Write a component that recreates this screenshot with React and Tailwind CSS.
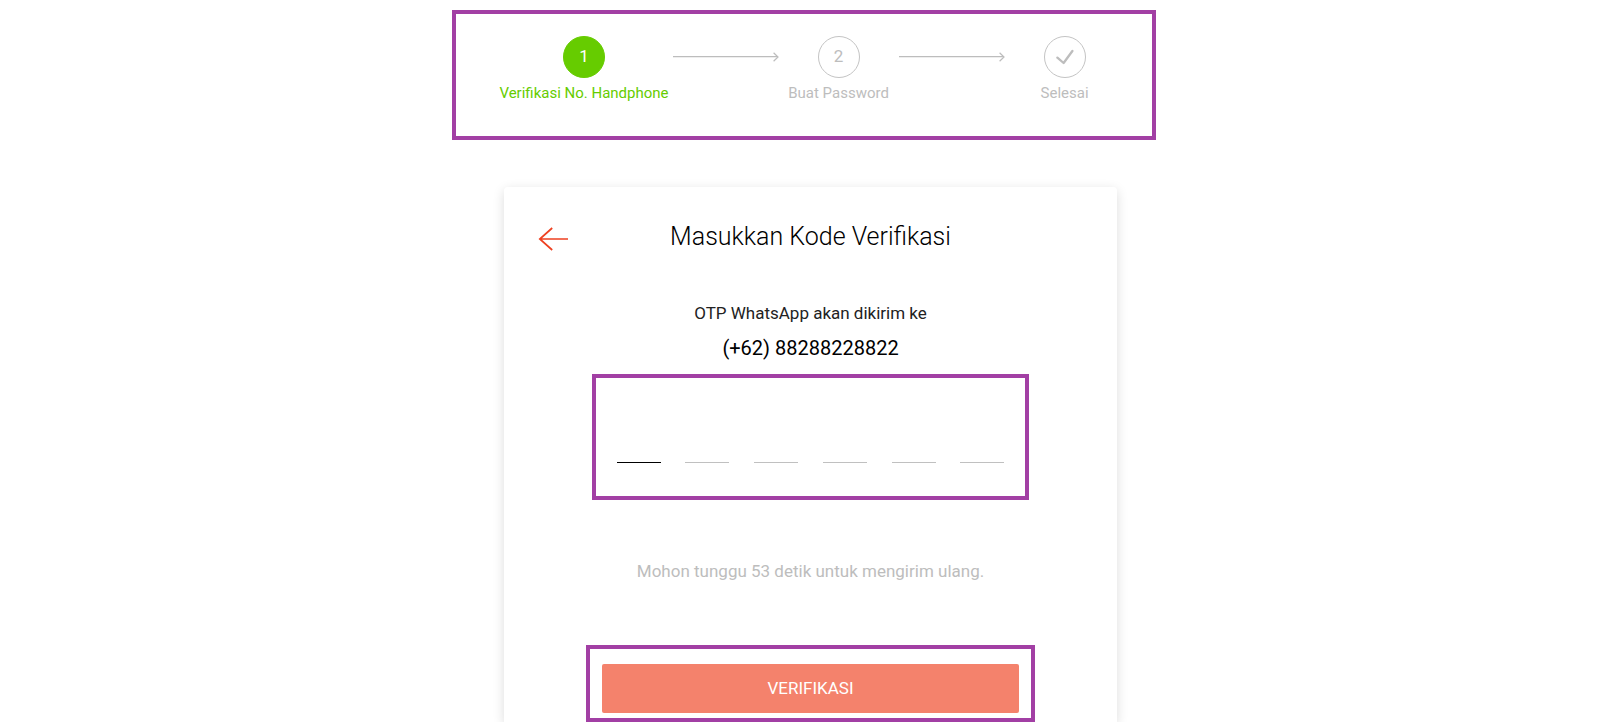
import React, { useState } from "react";
import clsx from "clsx";

const steps = [
  { id: 1, label: "Verifikasi No. Handphone" },
  { id: 2, label: "Buat Password" },
  { id: 3, label: "Selesai" },
];

function StepArrow() {
  return (
    <svg
      className="mt-4 h-[10px] w-[106px] shrink-0 text-[#bdbdbd]"
      viewBox="0 0 106 10"
      fill="none"
      stroke="currentColor"
      aria-hidden="true"
    >
      <path d="M0 4.6H105" strokeWidth="1.2" />
      <path d="M100.6 .8L105 5L100.6 9.2" strokeWidth="1.2" />
    </svg>
  );
}

function CheckMark() {
  return (
    <svg
      className="h-[16px] w-[18px]"
      viewBox="0 0 18 16"
      fill="none"
      stroke="currentColor"
      strokeWidth="2.3"
      strokeLinecap="round"
      strokeLinejoin="round"
      aria-hidden="true"
    >
      <path d="M1.4 8.6L7.6 14L16.4 2" />
    </svg>
  );
}

function Stepper({ current }) {
  return (
    <ol className="flex justify-center">
      {steps.map((step, index) => (
        <li className="flex" key={step.id}>
          {index > 0 && <StepArrow />}
          <div
            className={clsx(
              "flex min-w-[120px] flex-col items-center px-1",
              step.id === current ? "text-[#66cc00]" : "text-[#bdbdbd]"
            )}
          >
            <div
              className={clsx(
                "flex size-[42px] items-center justify-center rounded-full border text-[17px]",
                step.id === current
                  ? "border-[#66cc00] bg-[#66cc00] text-white"
                  : "border-[#c4c4c4]"
              )}
            >
              {step.id === steps.length ? <CheckMark /> : step.id}
            </div>
            <p className="mt-[5px] text-[15px] leading-5 whitespace-nowrap">
              {step.label}
            </p>
          </div>
        </li>
      ))}
    </ol>
  );
}

function OtpInput({ length }) {
  const [code, setCode] = useState(Array(length).fill(""));

  const handleChange = (index, value) => {
    setCode(code.map((digit, i) => (i === index ? value : digit)));
  };

  return (
    <div className="flex w-full max-w-[388px] justify-between">
      {code.map((digit, index) => (
        <input
          key={index}
          aria-label={`Digit ${index + 1}`}
          className={clsx(
            "h-10 w-11 border-b bg-transparent text-center text-2xl outline-none",
            index === 0 ? "border-black" : "border-[#c0c0c0]"
          )}
          inputMode="numeric"
          maxLength={1}
          value={digit}
          onChange={(e) => handleChange(index, e.target.value)}
        />
      ))}
    </div>
  );
}

export default function App() {
  return (
    <div className="flex min-h-screen flex-col overflow-hidden bg-white pt-[10px] font-[Roboto,sans-serif] text-black">
      {/* langkah pendaftaran */}
      <header className="pl-2">
        <div className="mx-auto w-full max-w-[704px] border-4 border-[#a23fa4] pt-[22px] pb-[33px] pl-3">
          <Stepper current={1} />
        </div>
      </header>

      {/* form verifikasi */}
      <main className="mt-[47px] flex flex-1 flex-col pl-[21px]">
        <form className="mx-auto flex w-full max-w-[613px] flex-1 flex-col items-center rounded-t shadow-[0_3px_12px_rgba(0,0,0,0.14)]">
          <div className="grid w-full grid-cols-[1fr_auto_1fr] items-center px-[34px] pt-[34px]">
            <button type="button" aria-label="Kembali" className="mt-1 w-8">
              <svg
                className="h-6 w-8"
                viewBox="0 0 32 24"
                fill="none"
                stroke="#ee4020"
                strokeWidth="1.7"
                aria-hidden="true"
              >
                <path d="M14.2 1L1.8 12L14.2 23M1.8 12H30" />
              </svg>
            </button>
            <h1 className="text-[25px] leading-8 font-light">
              Masukkan Kode Verifikasi
            </h1>
          </div>

          <p className="mt-12 text-[17px] leading-6 text-[#222]">
            OTP WhatsApp akan dikirim ke
          </p>
          <p className="mt-[9px] text-xl leading-7">(+62) 88288228822</p>

          <div className="mt-3 flex w-full max-w-[437px] justify-center border-4 border-[#a23fa4] pt-[45px] pb-[33px]">
            <OtpInput length={6} />
          </div>

          <p className="mt-[59px] text-[17px] leading-6 text-[#bdbdbd]">
            Mohon tunggu 53 detik untuk mengirim ulang.
          </p>

          <div className="mt-[62px] w-full max-w-[449px] border-4 border-[#a23fa4] px-3 pt-[15px] pb-[5px]">
            <button
              type="submit"
              className="h-[49px] w-full rounded-xs bg-[#f4826c] text-[17px] text-white"
            >
              VERIFIKASI
            </button>
          </div>
        </form>
      </main>
    </div>
  );
}
